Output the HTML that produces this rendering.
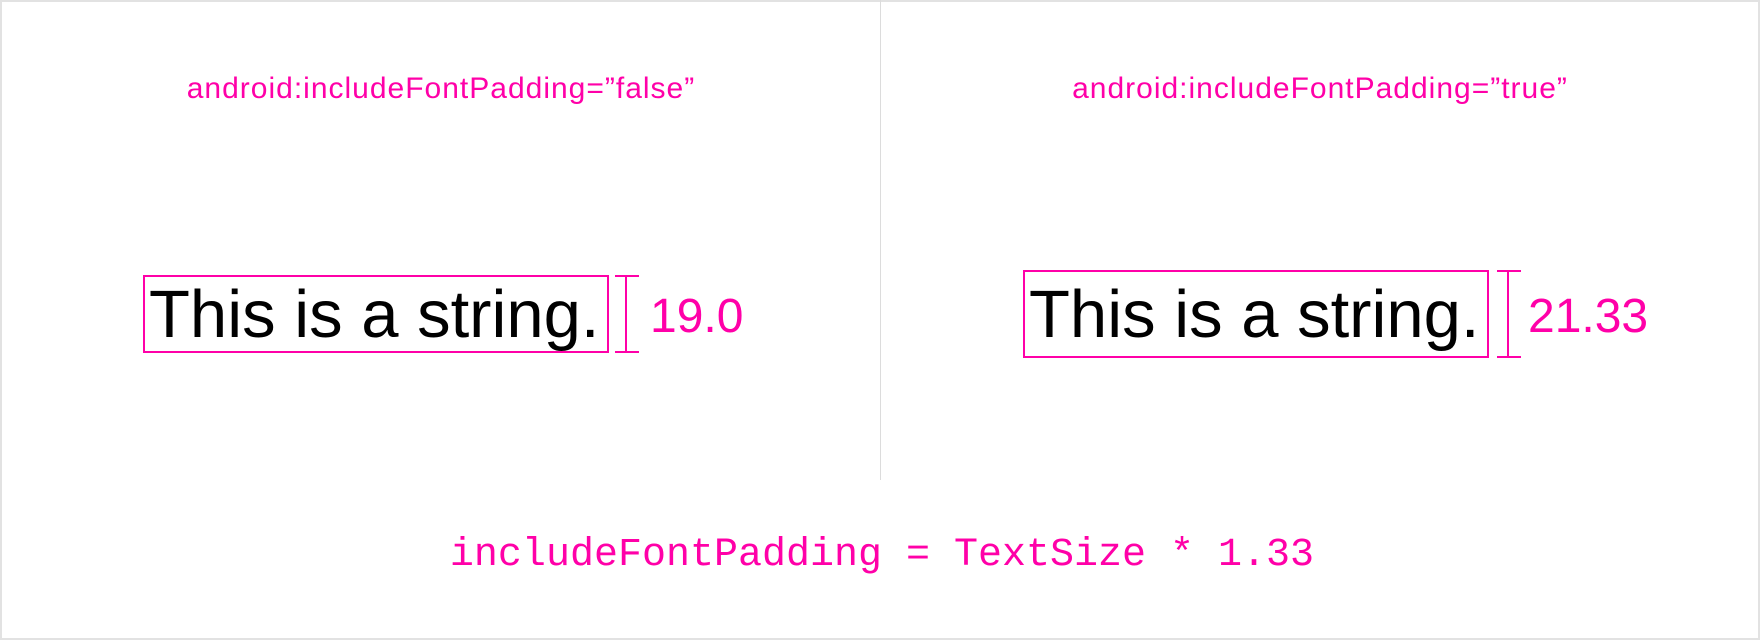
<!DOCTYPE html>
<html><head><meta charset="utf-8"><style>
html,body{margin:0;padding:0}
body{width:1760px;height:640px;position:relative;background:#fff;overflow:hidden;font-family:"Liberation Sans",sans-serif}
.frame{position:absolute;left:0;top:0;width:1756px;height:636px;border:2px solid #e2e2e2}
.div{position:absolute;left:880px;top:0;width:1px;height:480px;background:#dcdcdc}
.t{position:absolute;white-space:nowrap;line-height:1}
.pink{color:#ff00a8}
.hdr{font-size:30px;letter-spacing:1px;width:700px;text-align:center}
.main{font-size:67px;color:#000}
.box{position:absolute;border:2px solid #ff00a8;box-sizing:border-box}
.br{position:absolute;width:24px;box-sizing:border-box;border-top:2px solid #ff00a8;border-bottom:2px solid #ff00a8}
.br:after{content:"";position:absolute;left:10px;top:0;bottom:0;width:2px;background:#ff00a8}
.num{font-size:48px}
.mono{font-family:"Liberation Mono",monospace;font-size:40px;width:1000px;text-align:center}
</style></head><body>
<div class="frame"></div>
<div class="div"></div>
<div class="t pink hdr" style="left:91px;top:74px">android:includeFontPadding=”false”</div>
<div class="t pink hdr" style="left:970px;top:74px">android:includeFontPadding=”true”</div>

<div class="box" style="left:143px;top:275px;width:466px;height:78px"></div>
<div class="t main" style="left:149px;top:281px">This is a string.</div>
<div class="br" style="left:615px;top:275px;height:78px"></div>
<div class="t pink num" style="left:650px;top:293px">19.0</div>

<div class="box" style="left:1023px;top:270px;width:466px;height:88px"></div>
<div class="t main" style="left:1029px;top:281px">This is a string.</div>
<div class="br" style="left:1497px;top:270px;height:88px"></div>
<div class="t pink num" style="left:1528px;top:293px">21.33</div>

<div class="t pink mono" style="left:382px;top:536px">includeFontPadding = TextSize * 1.33</div>
</body></html>
